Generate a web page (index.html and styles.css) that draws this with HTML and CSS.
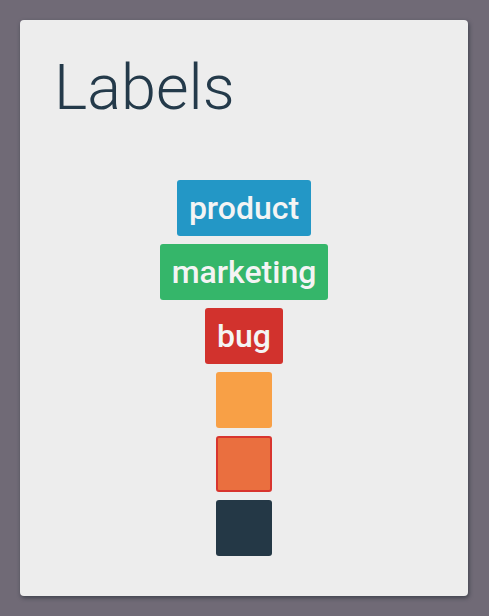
FILE: index.html
```html
<!DOCTYPE html>
<html>
<head>
<meta charset="utf-8">
<link rel="stylesheet" href="styles.css">
</head>
<body>
<div class="card">
  <h1 class="title">Labels</h1>
  <div class="labels">
    <span class="label blue">product</span>
    <span class="label green">marketing</span>
    <span class="label red">bug</span>
    <span class="label swatch orange"></span>
    <span class="label swatch mixed"></span>
    <span class="label swatch dark"></span>
  </div>
</div>
</body>
</html>
```
FILE: styles.css
```css
html, body {
  margin: 0;
  padding: 0;
  background: #706a76;
}
body {
  padding: 20px 21px 20px 20px;
  font-family: Roboto, "Liberation Sans", sans-serif;
}
.card {
  width: 448px;
  height: 576px;
  box-sizing: border-box;
  background: #ededed;
  border-radius: 4px;
  box-shadow: 1px 2px 4px rgba(30, 40, 50, 0.6);
  padding: 36px 20px 0 34px;
}
.title {
  margin: 0;
  font-weight: 300;
  font-size: 63px;
  line-height: 64px;
  color: #243a4a;
}
.labels {
  margin-top: 60px;
  display: flex;
  flex-direction: column;
  align-items: center;
  gap: 8px;
  padding-right: 14px;
}
.label {
  height: 56px;
  box-sizing: border-box;
  padding: 0 12px;
  border-radius: 3px;
  color: #f4f4f4;
  font-size: 32px;
  font-weight: 500;
  line-height: 56px;
}
.blue { background: #2397c6; }
.green { background: #35b66a; }
.red { background: #d2322d; }
.swatch { width: 56px; padding: 0; }
.orange { background: #f8a046; }
.mixed { background: #ea6f3f; border: 2px solid #d8352e; }
.dark { background: #243846; }
```
